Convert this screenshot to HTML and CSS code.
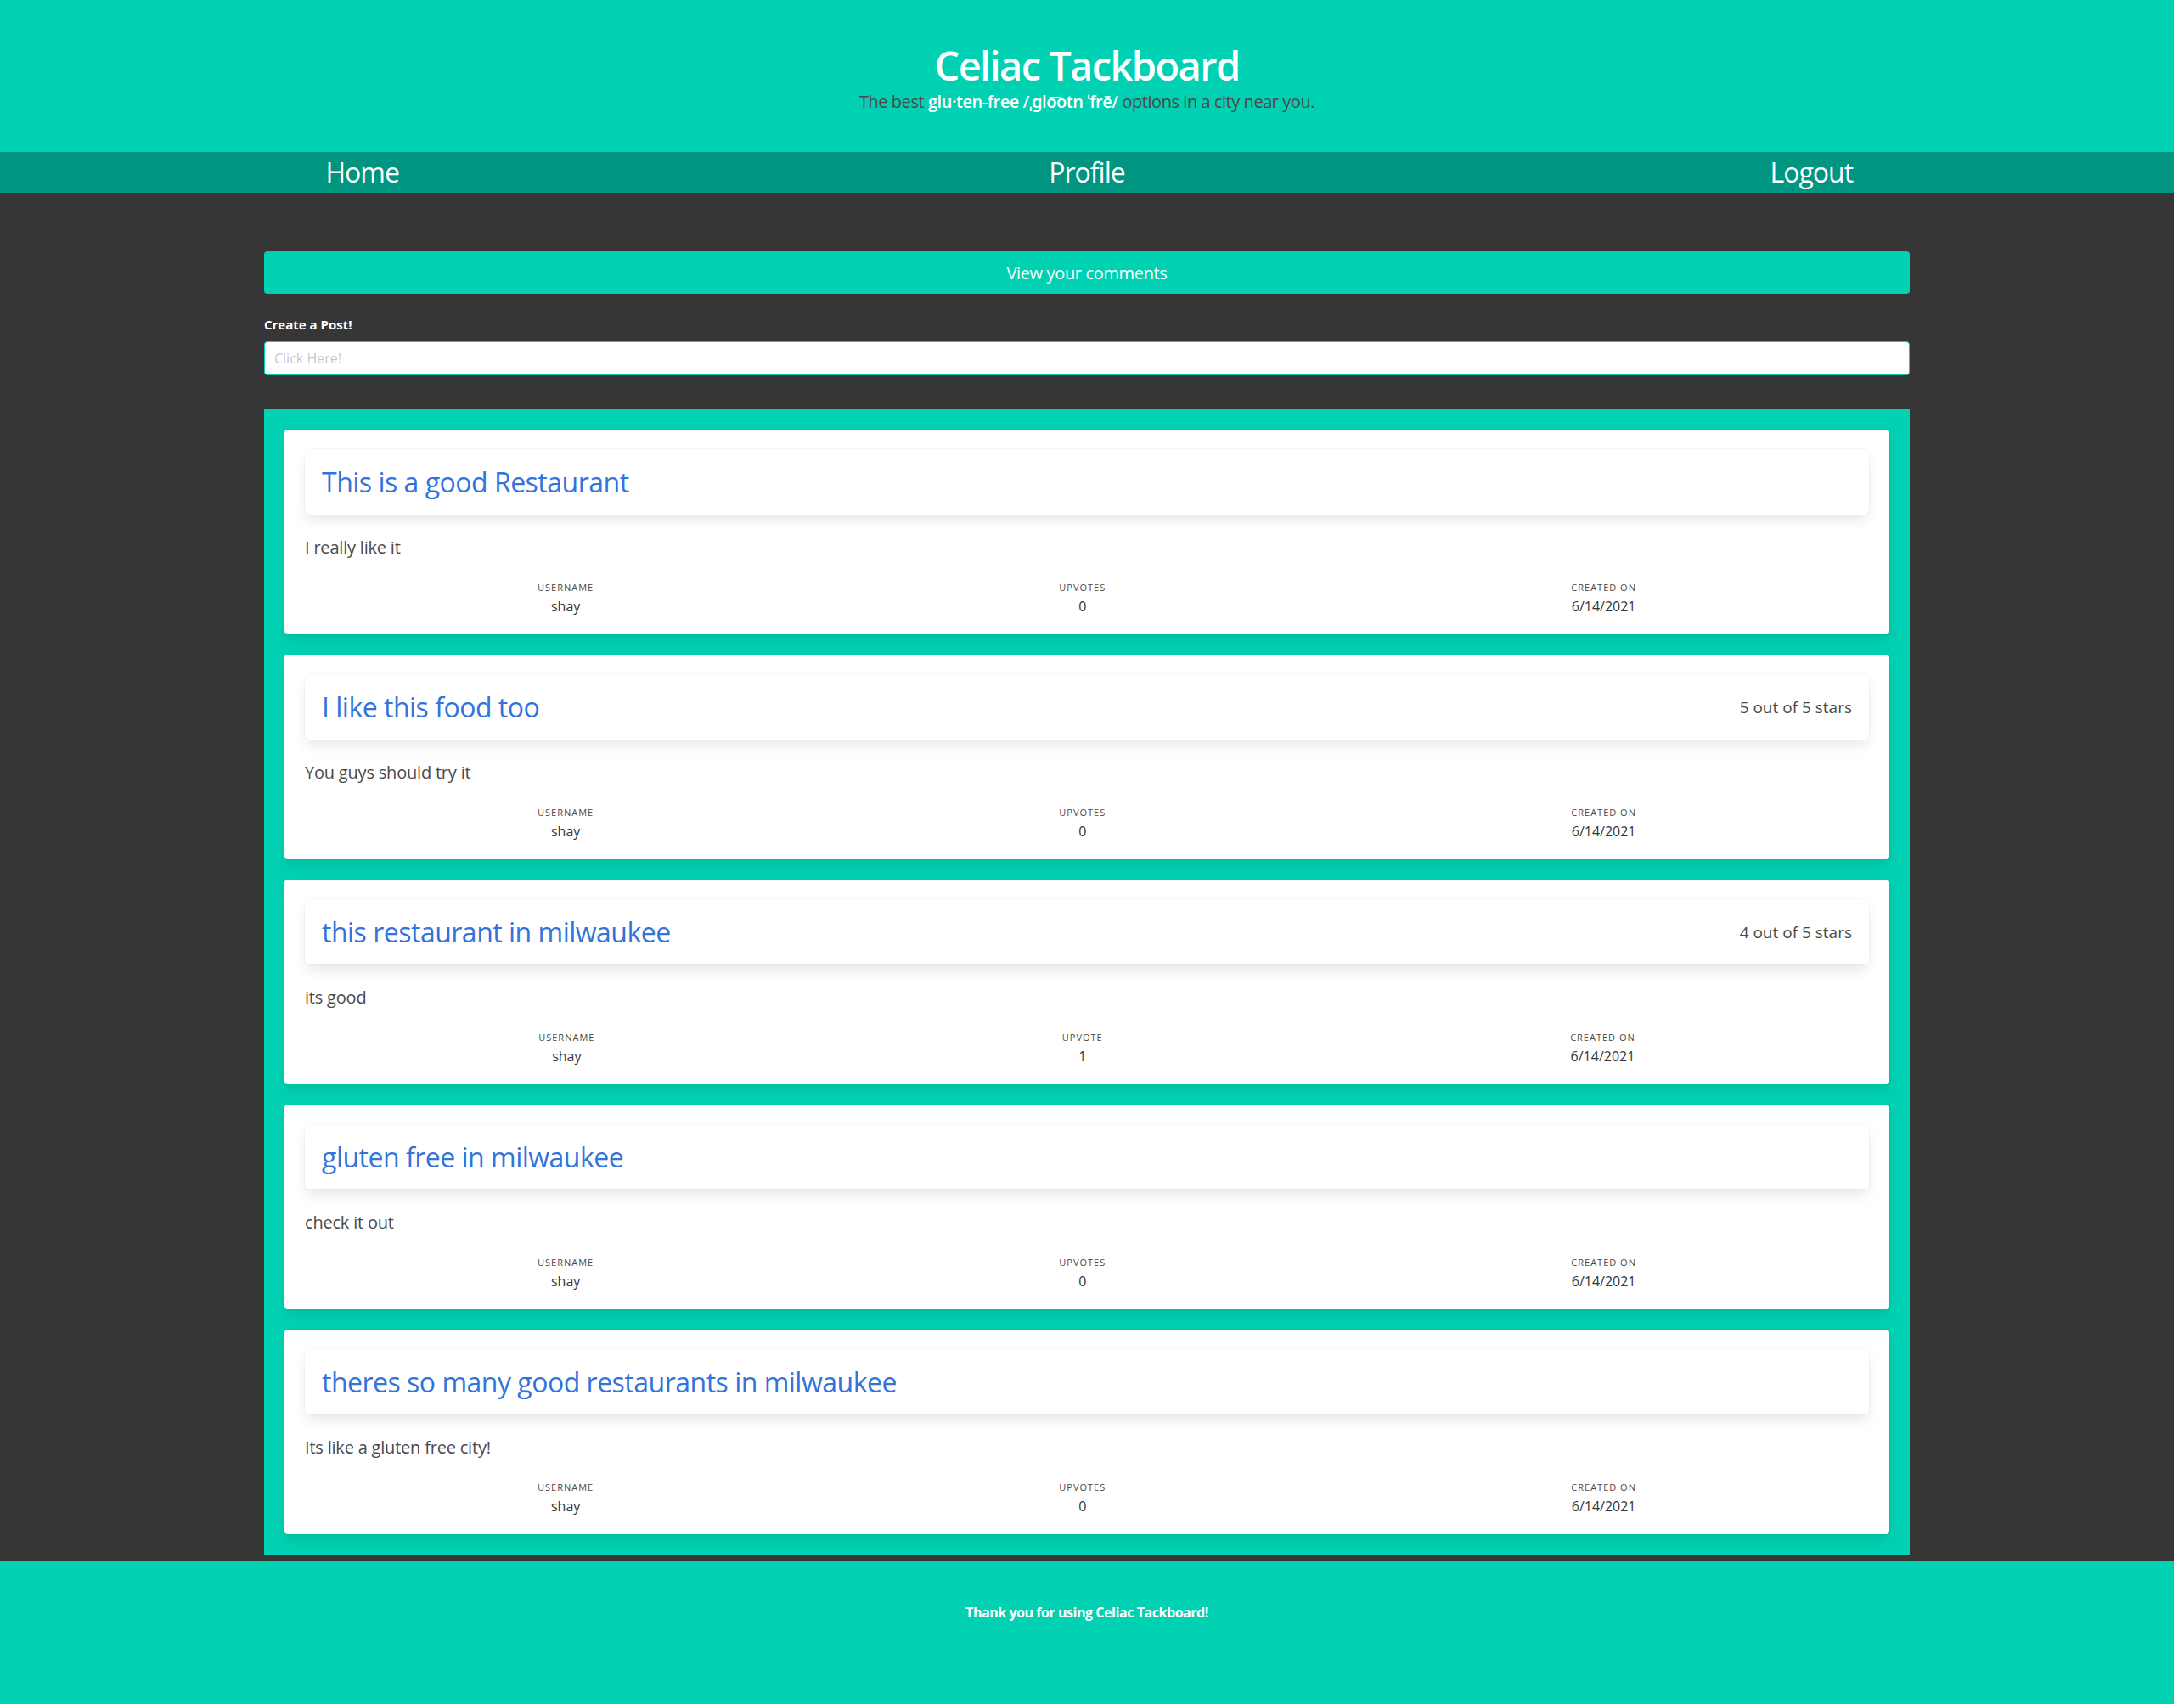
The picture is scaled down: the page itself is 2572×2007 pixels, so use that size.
FILE: index.html
```html
<!DOCTYPE html>
<html lang="en">
<head>
<meta charset="utf-8">
<title>Celiac Tackboard</title>
<link rel="stylesheet" href="styles.css">
</head>
<body>
<div class="page">
  <header class="hero">
    <h1 class="hero-title">Celiac Tackboard</h1>
    <p class="hero-subtitle">The best <strong>glu·ten-free /ˌɡlo͞otn ˈfrē/</strong> options in a city near you.</p>
  </header>
  <nav class="nav">
    <a class="nav-item" href="#">Home</a>
    <a class="nav-item" href="#">Profile</a>
    <a class="nav-item" href="#">Logout</a>
  </nav>
  <main class="main">
    <div class="container">
      <button class="btn-comments" type="button">View your comments</button>
      <label class="label" for="post">Create a Post!</label>
      <input class="input" id="post" type="text" placeholder="Click Here!">
      <section class="posts">
        <article class="card">
          <div class="card-head"><h2 class="card-title">This is a good Restaurant</h2></div>
          <p class="card-text">I really like it</p>
          <div class="level">
            <div class="level-item"><p class="heading">Username</p><p class="value">shay</p></div>
            <div class="level-item"><p class="heading">Upvotes</p><p class="value">0</p></div>
            <div class="level-item"><p class="heading">Created On</p><p class="value">6/14/2021</p></div>
          </div>
        </article>
        <article class="card">
          <div class="card-head"><h2 class="card-title">I like this food too</h2><span class="stars">5 out of 5 stars</span></div>
          <p class="card-text">You guys should try it</p>
          <div class="level">
            <div class="level-item"><p class="heading">Username</p><p class="value">shay</p></div>
            <div class="level-item"><p class="heading">Upvotes</p><p class="value">0</p></div>
            <div class="level-item"><p class="heading">Created On</p><p class="value">6/14/2021</p></div>
          </div>
        </article>
        <article class="card">
          <div class="card-head"><h2 class="card-title">this restaurant in milwaukee</h2><span class="stars">4 out of 5 stars</span></div>
          <p class="card-text">its good</p>
          <div class="level">
            <div class="level-item"><p class="heading">Username</p><p class="value">shay</p></div>
            <div class="level-item"><p class="heading">Upvote</p><p class="value">1</p></div>
            <div class="level-item"><p class="heading">Created On</p><p class="value">6/14/2021</p></div>
          </div>
        </article>
        <article class="card">
          <div class="card-head"><h2 class="card-title">gluten free in milwaukee</h2></div>
          <p class="card-text">check it out</p>
          <div class="level">
            <div class="level-item"><p class="heading">Username</p><p class="value">shay</p></div>
            <div class="level-item"><p class="heading">Upvotes</p><p class="value">0</p></div>
            <div class="level-item"><p class="heading">Created On</p><p class="value">6/14/2021</p></div>
          </div>
        </article>
        <article class="card">
          <div class="card-head"><h2 class="card-title">theres so many good restaurants in milwaukee</h2></div>
          <p class="card-text">Its like a gluten free city!</p>
          <div class="level">
            <div class="level-item"><p class="heading">Username</p><p class="value">shay</p></div>
            <div class="level-item"><p class="heading">Upvotes</p><p class="value">0</p></div>
            <div class="level-item"><p class="heading">Created On</p><p class="value">6/14/2021</p></div>
          </div>
        </article>
      </section>
    </div>
  </main>
  <footer class="footer">
    <p class="footer-text">Thank you for using Celiac Tackboard!</p>
  </footer>
</div>
</body>
</html>
```
FILE: styles.css
```css
* { box-sizing: border-box; }
html { background: #ffffff; }
body {
  margin: 0;
  font-family: "Open Sans", "Noto Sans", "DejaVu Sans", sans-serif;
  font-size: 16px;
  color: #4a4a4a;
}
p, h1, h2 { margin: 0; }
.page {
  width: 2560px;
  min-height: 2007px;
  display: flex;
  flex-direction: column;
  background: #363636;
}
.hero {
  background: #00d1b2;
  height: 179px;
  padding-top: 50px;
  text-align: center;
}
.hero-title {
  font-size: 47px;
  line-height: 54px;
  font-weight: 600;
  letter-spacing: -1.6px;
  color: #ffffff;
}
.hero-subtitle {
  margin-top: 3px;
  font-size: 20px;
  line-height: 25px;
  letter-spacing: -0.45px;
  color: #4a4a4a;
}
.hero-subtitle strong {
  color: #ffffff;
  font-weight: 600;
}
.nav {
  display: flex;
  background: #009580;
  height: 48px;
}
.nav-item {
  flex: 1 1 0;
  text-align: center;
  color: #ffffff;
  text-decoration: none;
  font-size: 32px;
  line-height: 48px;
  letter-spacing: -1px;
}
.main {
  padding: 69px 0 8px;
}
.container {
  width: 1938px;
  margin: 0 auto;
  display: flex;
  flex-direction: column;
}
.btn-comments {
  height: 50px;
  border: none;
  border-radius: 4px;
  background: #00d1b2;
  color: #ffffff;
  font-family: inherit;
  font-size: 20px;
  letter-spacing: -0.35px;
  cursor: pointer;
}
.label {
  margin-top: 24px;
  font-size: 15px;
  line-height: 24px;
  font-weight: 700;
  color: #ffffff;
}
.input {
  margin-top: 8px;
  height: 40px;
  border: 1px solid #00d1b2;
  border-radius: 4px;
  padding: 0 11px;
  font-family: inherit;
  font-size: 16px;
  background: #ffffff;
}
.input::placeholder { color: rgba(54, 54, 54, 0.3); }
.posts {
  margin-top: 40px;
  background: #00d1b2;
  padding: 24px;
  display: flex;
  flex-direction: column;
  gap: 24px;
}
.card {
  background: #ffffff;
  border-radius: 4px;
  padding: 23px 24px 21px;
  box-shadow: 0 8px 16px -2px rgba(10, 10, 10, 0.1), 0 0 0 1px rgba(10, 10, 10, 0.02);
}
.card-head {
  display: flex;
  align-items: center;
  justify-content: space-between;
  height: 77px;
  padding: 0 20px;
  border-radius: 6px;
  background: #ffffff;
  box-shadow: 0 8px 16px -2px rgba(10, 10, 10, 0.1), 0 0 0 1px rgba(10, 10, 10, 0.02);
}
.card-title {
  font-size: 32px;
  line-height: 36px;
  font-weight: 400;
  letter-spacing: -0.5px;
  color: #3273dc;
}
.stars {
  font-size: 19px;
  color: #4a4a4a;
}
.card-text {
  margin-top: 24px;
  font-size: 20px;
  line-height: 30px;
  letter-spacing: -0.2px;
  color: #4a4a4a;
}
.level {
  margin-top: 23px;
  display: flex;
}
.level-item {
  flex: 1 1 auto;
  text-align: center;
}
.heading {
  font-size: 11px;
  line-height: 17px;
  letter-spacing: 1px;
  text-transform: uppercase;
  color: #4a4a4a;
}
.value {
  margin-top: 2px;
  font-size: 16px;
  line-height: 24px;
  font-weight: 500;
  color: #363636;
}
.footer {
  flex: 1;
  background: #00d1b2;
  padding: 48px 24px 96px;
  text-align: center;
}
.footer-text {
  font-size: 16px;
  line-height: 24px;
  font-weight: 700;
  letter-spacing: -0.45px;
  color: #ffffff;
}
```
